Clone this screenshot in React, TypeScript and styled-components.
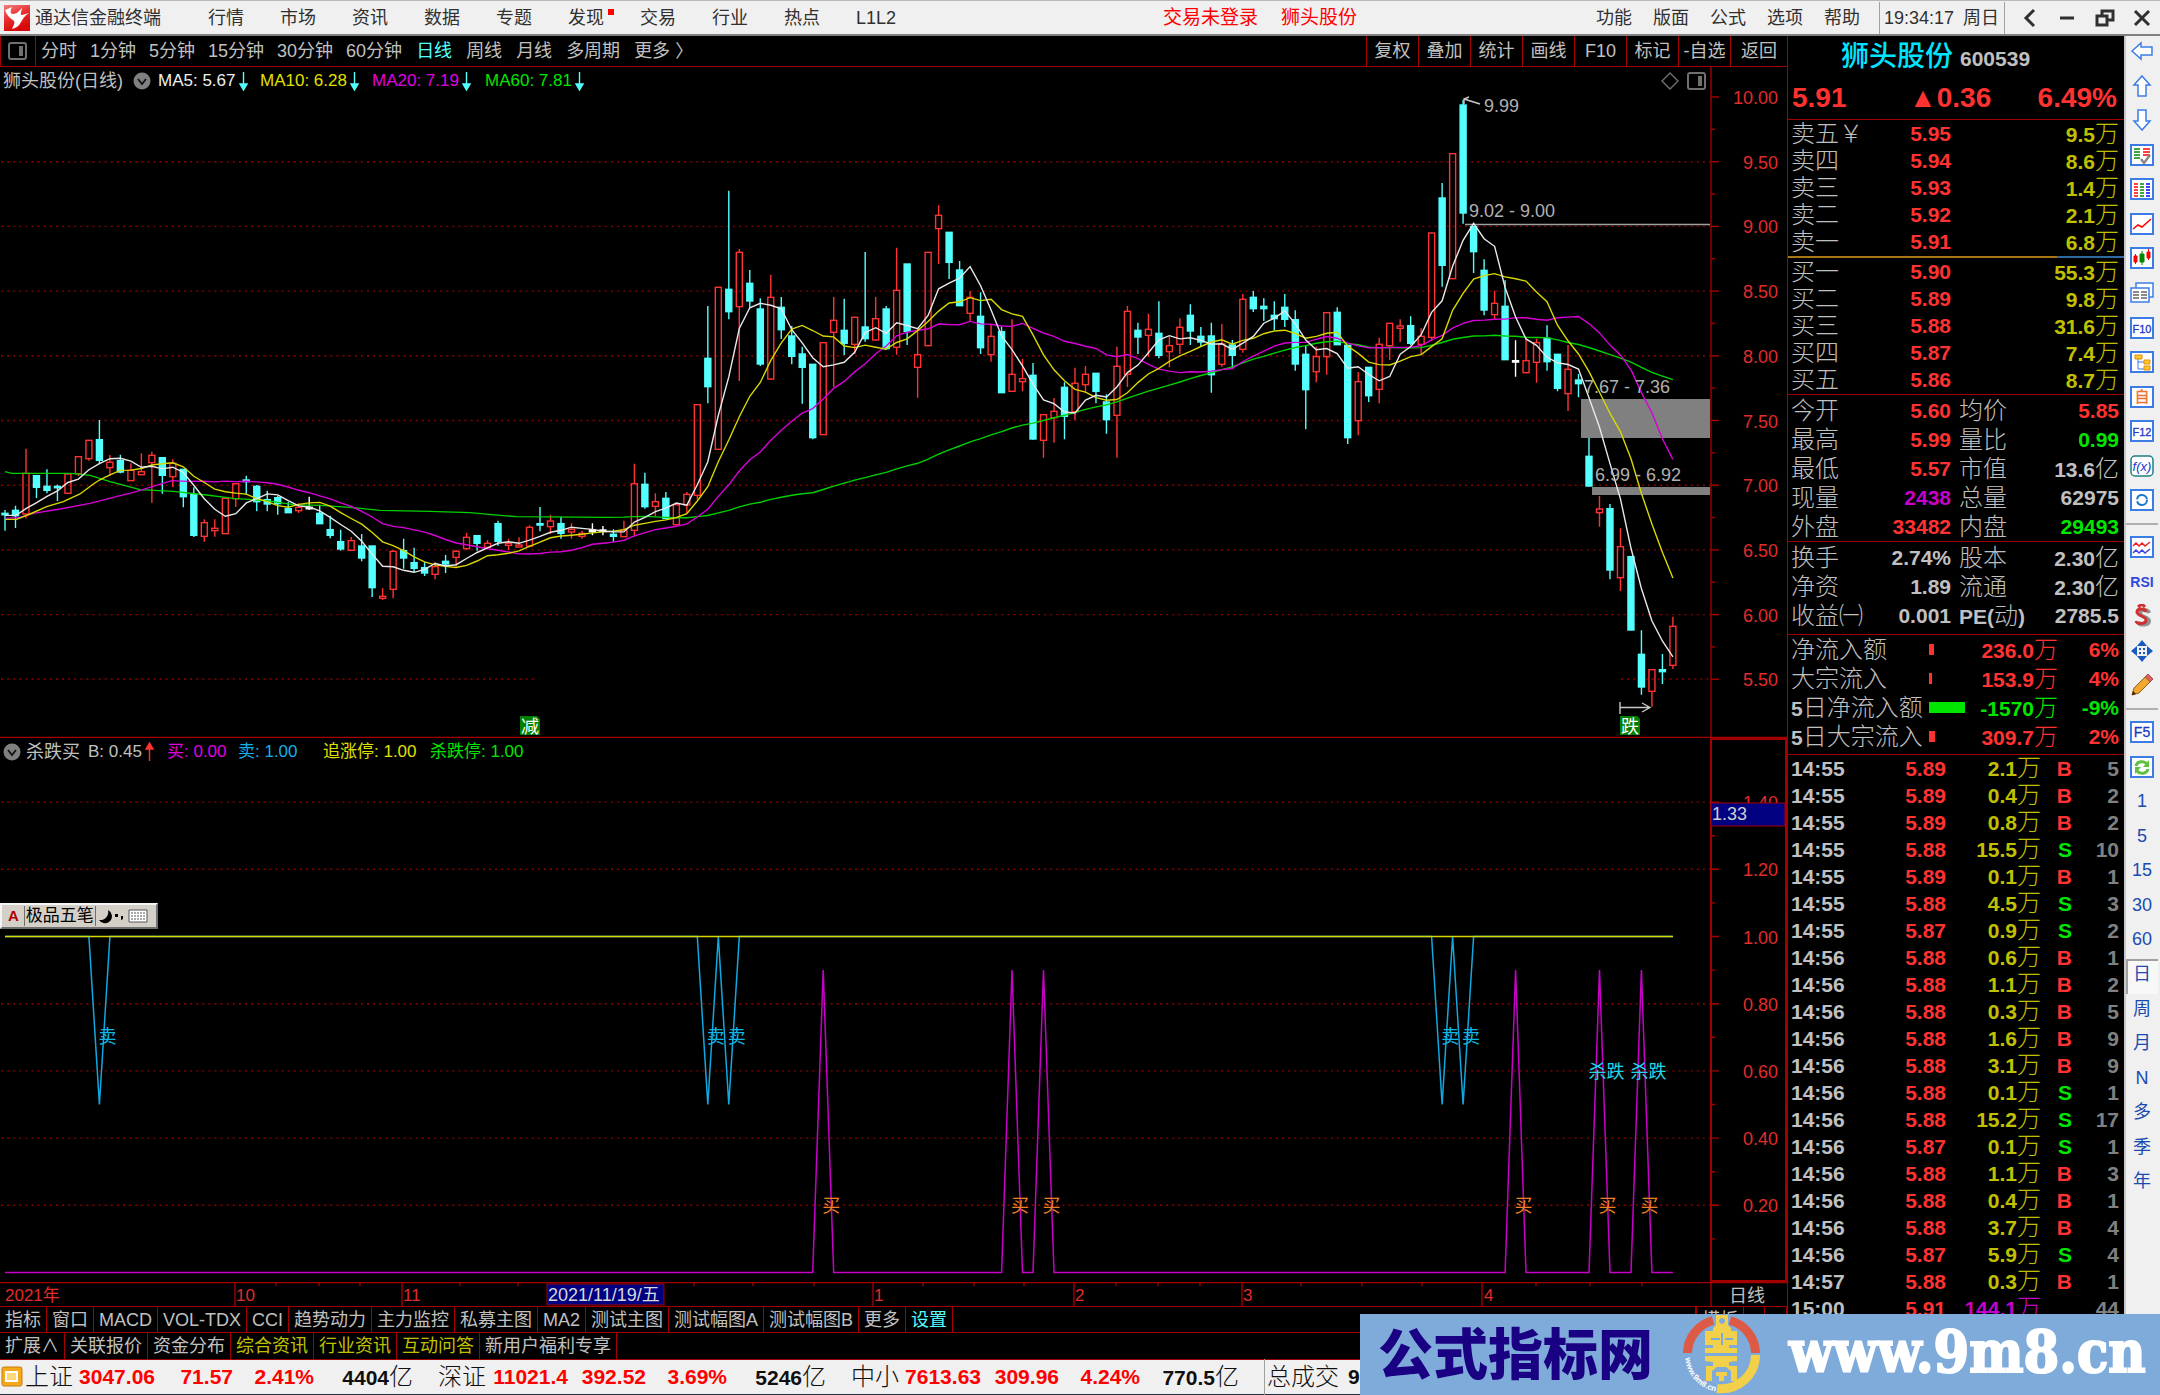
import React from "react";
import styled, { createGlobalStyle } from "styled-components";

const RED = "#ff3232";
const LINE = "#a40000";
const CYAN = "#54ffff";
const GRAY = "#c0c0c0";
const YEL = "#c0c000";
const GREEN = "#00e600";
const MAG = "#c800c8";
const SANS = `"Liberation Sans", "Noto Sans CJK SC", sans-serif`;

const Global = createGlobalStyle`
  * { box-sizing: border-box; }
  body { margin: 0; background: #000; font-family: ${SANS}; font-size: 18px; line-height: 24px; color: ${GRAY}; }
  button { font: inherit; color: inherit; background: none; border: 0; padding: 0; margin: 0; white-space: nowrap; }
  svg { display: block; flex: none; }
`;

const Page = styled.div`
  display: flex;
  flex-direction: column;
  height: 100vh;
  overflow: hidden;
`;

/* ---------- top menu ---------- */
const TopBar = styled.header`
  display: flex;
  align-items: center;
  height: 36px;
  flex: none;
  padding-left: 4px;
  background: #f0f0f0;
  border-top: 1px solid #b8b8b8;
  border-bottom: 2px solid #808080;
  color: #303030;
`;
const Brand = styled.div`
  display: flex;
  align-items: center;
  gap: 5px;
  width: 204px;
`;
const Menu = styled.nav<{ $gap: number }>`
  display: flex;
  gap: ${(p) => p.$gap}px;
`;
const MenuItem = styled.button`
  position: relative;
`;
const Dot = styled.i`
  position: absolute;
  right: -10px;
  top: 3px;
  width: 6px;
  height: 6px;
  background: #f00;
`;
const Notice = styled.div`
  display: flex;
  gap: 23px;
  margin-left: auto;
  margin-right: 239px;
  font-size: 19px;
  color: #f00;
`;
const Clock = styled.time`
  display: flex;
  align-items: center;
  justify-content: space-between;
  width: 126px;
  height: 32px;
  margin-left: 19px;
  padding: 0 5px 0 4px;
  border-left: 1px solid #a0a0a0;
  border-right: 1px solid #a0a0a0;
`;
const WindowButtons = styled.div`
  display: flex;
  width: 155px;
  justify-content: space-between;
  padding: 0 6px 0 13px;
`;

/* ---------- main frame ---------- */
const Body = styled.div`
  display: flex;
  flex: 1;
  min-height: 0;
`;
const ChartColumn = styled.main`
  display: flex;
  flex-direction: column;
  flex: 1;
  min-width: 0;
`;
const Toolbar = styled.div`
  display: flex;
  height: 31px;
  flex: none;
  border-bottom: 1px solid ${LINE};
`;
const PaneToggle = styled.button`
  display: grid;
  place-items: center;
  width: 36px;
  margin-right: 5px;
  border: solid ${LINE};
  border-width: 0 1px;
`;
const Periods = styled.div<{ $gap: number }>`
  display: flex;
  align-items: center;
  gap: ${(p) => p.$gap}px;
  margin-right: 14px;
`;
const Period = styled.button<{ $on?: boolean }>`
  color: ${(p) => (p.$on ? CYAN : GRAY)};
`;
const Tools = styled.div`
  display: flex;
  margin-left: auto;
`;
const Tool = styled.button`
  width: 52px;
  border-left: 1px solid ${LINE};
  &:last-child {
    width: 57px;
  }
`;
const Pane = styled.section<{ $grow: number }>`
  position: relative;
  flex: ${(p) => p.$grow} 1 0;
  min-height: 0;
  svg.plot {
    width: 100%;
    height: 100%;
  }
`;
const Legend = styled.div`
  position: absolute;
  top: 2px;
  left: 3px;
  display: flex;
  align-items: center;
  height: 24px;
  font-size: 17px;
`;
const LegendTitle = styled.span<{ $w: number }>`
  width: ${(p) => p.$w}px;
  font-size: 18px;
  white-space: nowrap;
`;
const LegendItem = styled.span<{ $c: string; $w: number }>`
  display: flex;
  align-items: center;
  gap: 3px;
  width: ${(p) => p.$w}px;
  color: ${(p) => p.$c};
  white-space: nowrap;
`;
const PaneTools = styled.div`
  position: absolute;
  top: 5px;
  right: 80px;
  display: flex;
  gap: 8px;
`;
const DateAxis = styled.div`
  height: 24px;
  flex: none;
  svg {
    width: 100%;
    height: 100%;
  }
`;
const TabRow = styled.div<{ $h: number }>`
  display: flex;
  flex: none;
  height: ${(p) => p.$h}px;
  border-top: 1px solid ${LINE};
`;
const Tab = styled.button<{ $c?: string }>`
  padding: 0 5px;
  border-right: 1px solid ${LINE};
  color: ${(p) => p.$c || GRAY};
`;
const TabEnd = styled.div`
  display: flex;
  margin-left: auto;
  border-left: 2px solid ${LINE};
`;

/* ---------- quote panel ---------- */
const Quote = styled.aside`
  display: flex;
  flex-direction: column;
  width: 337px;
  flex: none;
  border-left: 1px solid ${LINE};
  font-size: 24px;
  font-weight: 300;
`;
const NameRow = styled.div`
  display: flex;
  align-items: baseline;
  gap: 7px;
  height: 38px;
  line-height: 41px;
  padding-left: 53px;
`;
const StockName = styled.h1`
  margin: 0;
  font-size: 28px;
  font-weight: 500;
  color: #00e5ff;
`;
const Num = styled.span<{ $c?: string }>`
  font-size: 21px;
  font-weight: 700;
  color: ${(p) => p.$c || GRAY};
  text-align: right;
  white-space: nowrap;
`;
const Unit = styled.span`
  font-size: 24px;
  font-weight: 300;
`;
const LastRow = styled.div`
  display: grid;
  grid-template-columns: 117px 1fr auto;
  align-items: center;
  height: 45px;
  padding: 2px 7px 0 4px;
  font-size: 28px;
  font-weight: 700;
  color: ${RED};
`;
const Block = styled.div<{ $bottom?: number }>`
  padding: 0 5px ${(p) => p.$bottom || 0}px 3px;
  border-top: 1px solid ${LINE};
`;
const Levels = styled.div`
  padding: 0 5px 1px 3px;
`;
const SellLevels = styled(Levels)`
  border-top: 1px solid ${LINE};
`;
const Split = styled.div`
  height: 2px;
  background: linear-gradient(90deg, #a87414 80%, #2c6aa0 80%);
`;
const LevelRow = styled.div`
  display: grid;
  grid-template-columns: 80px 80px 1fr;
  grid-template-rows: 27px;
  line-height: 28px;
`;
const StatRow = styled.div`
  display: grid;
  grid-template-columns: auto 1fr 92px 76px;
  grid-template-rows: 29px;
  line-height: 31px;
  white-space: nowrap;
`;
const StatLabel = styled.span<{ $second?: boolean }>`
  padding-left: ${(p) => (p.$second ? 8 : 0)}px;
`;
const FlowRow = styled.div`
  display: grid;
  grid-template-columns: 138px 37px 1fr 61px;
  grid-template-rows: 29px;
  line-height: 30px;
  white-space: nowrap;
`;
const FlowBar = styled.i<{ $c: string }>`
  align-self: center;
  height: 11px;
  background: ${(p) => p.$c};
`;
const Ticks = styled.div`
  flex: 1;
  min-height: 0;
  padding: 0 5px 0 3px;
  overflow: hidden;
  border-top: 1px solid ${LINE};
`;
const TickTable = styled.table`
  width: 100%;
  table-layout: fixed;
  border-collapse: collapse;
  td {
    height: 27px;
    padding: 0;
    line-height: 24px;
    text-align: right;
  }
  td:first-child {
    width: 60px;
    text-align: left;
  }
  td:nth-child(2) {
    width: 95px;
  }
  td:nth-child(3) {
    width: 95px;
  }
  td:nth-child(4) {
    width: 31px;
  }
`;

/* ---------- side tool strip ---------- */
const Side = styled.nav`
  width: 36px;
  flex: none;
  padding-right: 2px;
  background: #f0f0f0;
  border-left: 2px solid #c8c8c8;
`;
const SideGroup = styled.div<{ $h: number }>`
  display: grid;
  grid-auto-rows: 1fr;
  height: ${(p) => p.$h}px;
`;
const SideRule = styled.hr`
  margin: 3px 0 7px;
  border: 0;
  border-top: 2px solid #b0b0b0;
`;
const SideButton = styled.button<{ $on?: boolean }>`
  display: grid;
  justify-content: center;
  align-content: start;
  padding-top: 3px;
  font-size: 18px;
  color: #1a4bb0;
  background: ${(p) => (p.$on ? "#f8f8f8" : "none")};
  box-shadow: ${(p) => (p.$on ? "inset 2px 2px #a0a0a0" : "none")};
`;

/* ---------- index strip ---------- */
const Strip = styled.footer`
  display: flex;
  align-items: center;
  flex: none;
  height: 36px;
  background: #f0f0f0;
  border-top: 1px solid #900;
  border-bottom: 1px solid #203040;
  color: #101010;
  font-size: 21px;
  font-weight: 700;
`;
const IndexGroup = styled.div`
  display: grid;
  grid-template-columns: 53px 77px 78px 81px 99px;
  flex: none;
  width: 413px;
  line-height: 36px;
  text-align: right;
`;
const IndexName = styled.span`
  font-size: 24px;
  font-weight: 300;
  text-align: left;
  white-space: nowrap;
`;
const Up = styled.span`
  color: #f00;
`;
const Total = styled.div`
  display: flex;
  gap: 9px;
  padding-left: 2px;
  line-height: 36px;
  white-space: nowrap;
  border-left: 1px solid #a0a0a0;
`;

const Ime = styled.div`
  position: absolute;
  left: 0;
  top: 165px;
  display: flex;
  align-items: center;
  width: 158px;
  height: 26px;
  padding: 0 2px;
  background: #d4d0c8;
  border: 2px solid #808080;
  border-color: #f4f4f4 #707070 #707070 #f4f4f4;
  color: #000;
  font-size: 17px;
`;
const ImeCell = styled.button`
  height: 20px;
  line-height: 20px;
  padding: 0 1px;
  border: solid #707070;
  border-width: 0 1px;
`;
const ImeMark = styled.b`
  font-size: 15px;
  color: #b00000;
  padding: 0 5px 0 4px;
`;

const Watermark = styled.div`
  position: absolute;
  right: 0;
  bottom: 0;
  display: flex;
  align-items: center;
  width: 800px;
  height: 81px;
  padding-left: 18px;
  background: #7fabda;
`;
const WatermarkTitle = styled.strong`
  width: 305px;
  font-size: 55px;
  font-weight: 900;
  line-height: 78px;
  color: #1a0082;
  white-space: nowrap;
`;
const WatermarkUrl = styled.a`
  margin-left: 29px;
  font-family: "DejaVu Serif Condensed", "DejaVu Serif", serif;
  font-size: 57px;
  font-weight: 700;
  line-height: 72px;
  padding-bottom: 6px;
  color: #fff;
  -webkit-text-stroke: 2px #fff;
  text-decoration: none;
`;

/* ---------- price data ----------
   One row per trading day: kind, high, body top, body bottom, low,
   in thirds of a chart unit below the base of its segment. */
const SEGMENTS: [number, string][] = [
  [400, `d330,340,344,392 d317,331,347,384 u146,220,342,355 d227,227,262,294 d208,259,271,280 d254,259,262,303
u222,222,280,280 u170,170,221,228 u120,121,176,182 d60,119,181,192 u165,187,203,228 d164,182,216,220
u190,211,242,242 u160,215,224,226 u155,166,188,308 d172,173,226,281 u178,190,230,262 d207,208,290,322
d262,284,406,411 u358,368,409,425 u358,385,392,410 u295,295,401,401 u250,251,296,321 d227,240,245,284
d255,259,305,334 d272,299,312,334 d287,293,311,344 d306,326,338,338 u310,322,332,339 w290,322,325,330
d314,340,371,371 d347,389,406,415 d389,425,447,452 u411,422,451,453 d402,438,474,484 d438,438,563,591
u565,589,595,600 u450,454,568,595 d416,452,474,506 d443,488,505,517 d486,503,519,528 u486,500,523,538
d465,484,492,519 u450,454,472,500 u398,412,446,449 d405,407,430,452 u420,430,442,446 d362,371,424,437`],
  [180, `u1076,1090,1096,1110 u1072,1095,1101,1101 u1036,1042,1098,1101 d981,1031,1035,1054 u1004,1023,1040,1062
d1010,1031,1060,1076 u1030,1048,1056,1076 u1052,1060,1069,1076 w1030,1050,1055,1066 w1038,1050,1053,1066
d1048,1063,1069,1085 u1022,1050,1070,1070 u851,911,1051,1070 d878,913,980,986 u940,965,979,1008 d936,955,1015,1018
u974,974,1034,1036 u936,943,975,1000 u673,674,946,958 d378,535,620,670 u320,322,808,808 d32,328,395,418
u207,217,380,603 d270,310,363,385 d355,387,552,558 u284,352,597,599 d351,382,449,477 d438,468,529,553
d500,522,562,671 d553,553,773,778 u487,488,764,765 u351,421,457,621 d356,451,490,525 u410,412,493,522
d216,441,476,485 u351,416,480,482 d378,387,506,510 u203,331,502,524 d252,252,454,495 u448,524,562,653 u216,217,497,498`],
  [190, `u46,76,116,222 d127,127,217,267 d213,240,347,348 u303,322,370,395 d307,379,473,492 u405,439,494,515
d410,425,608,609 u388,553,604,605 u506,566,575,604 d519,556,747,749 u672,674,751,803 u624,664,683,758
d577,592,679,748 u533,580,665,690 u528,553,584,608 d550,550,604,640 d613,636,689,731 u470,529,676,803
u348,364,553,591 d398,421,441,492 u371,418,436,500 d334,430,496,505 u440,467,485,532 u385,412,463,492
d343,376,423,465 d411,439,456,470 d398,438,554,608 u402,462,523,530 d450,465,496,537 u312,328,478,488
d303,322,356,366 d325,349,356,393 d334,376,386,420 d312,352,388,411 d361,389,522,542 d467,493,599,718
u470,500,545,577 u367,368,500,554 d352,367,464,465 d465,466,743,762 u546,575,692,736 d532,532,617,636
u443,463,598,640 u400,400,467,510`],
  [80, `u718,738,745,786 d709,737,790,795 u745,769,793,823 u458,459,772,784 d309,354,556,620 u220,221,596,597
d60,75,399,431 d437,440,515,579 d538,571,690,706 u632,670,704,720 d601,679,839,840 w781,842,845,890
u775,842,878,880 u776,788,847,908 d736,775,845,872 d822,823,925,934 u795,868,941,993 d882,900,911,952`],
  [360, `d234,289,378,380 u408,447,458,500 d432,446,630,658 u505,560,653,693 d590,590,810,811 d811,883,981,1004
u928,929,994,1040 d882,929,935,972 u770,799,916,927`],
];
type Candle = { k: string; hi: number; top: number; bot: number; lo: number };
const candles: Candle[] = SEGMENTS.flatMap(([base, rows]) =>
  rows.split(/\s+/).map((r) => {
    const [hi, top, bot, lo] = r.slice(1).split(",").map((v) => base + Number(v) / 3);
    return { k: r[0], hi, top, bot, lo };
  })
);
const cx = (i: number) => 5 + 10.49 * i;
const closes = candles.map((c) => (c.k === "d" ? c.bot : c.top));

/* Average line: days before the loaded range come from a stored lead-in. */
const average = (n: number, lead: number[][]) => {
  const pts = lead.map(([x, y]) => `${x / 3},${400 + y / 3}`);
  for (let i = n - 1; i < closes.length; i++) {
    const sum = closes.slice(i - n + 1, i + 1).reduce((a, b) => a + b, 0);
    pts.push(`${cx(i).toFixed(1)},${(sum / n).toFixed(1)}`);
  }
  return pts.join(" ");
};
const AVERAGES: [string, string][] = [
  ["#00d000", average(60, [[15, 215], [35, 220], [215, 220], [270, 226], [330, 245], [420, 269], [520, 274], [620, 285], [700, 295], [800, 302], [880, 314], [960, 316], [1060, 323], [1140, 331], [1290, 334], [1410, 338], [1500, 346], [1550, 350], [1820, 352]])],
  ["#d800d8", average(20, [[15, 355], [60, 352], [100, 340], [180, 327], [270, 310], [340, 292], [400, 277], [440, 265], [515, 242], [560, 244]])],
  ["#d8d800", average(10, [[15, 358], [50, 358], [90, 342], [140, 320], [190, 305], [240, 282], [280, 252]])],
  ["#e8e8e8", average(5, [[15, 346], [48, 346], [79, 325], [110, 308]])],
];
const priceY = (p: number) => 97 + (10 - p) * 129.4;
const valueY = (v: number) => 1272.5 - v * 336;

const PriceChart = () => (
  <svg className="plot" viewBox="0 67 1787 671" fontFamily={SANS} fontSize="18">
    {[9.5, 9, 8.5, 8, 7.5, 7, 6.5, 6].map((p) => (
      <line key={p} x1="1" x2="1710" y1={priceY(p)} y2={priceY(p)} stroke="#8c0000" strokeWidth="1.4" strokeDasharray="2 4.1" />
    ))}
    <path d="M1 679H537M1621 679H1710" stroke="#8c0000" strokeWidth="1.4" strokeDasharray="2 4.1" />
    <path d="M1465 224.5H1710" stroke="#a0a0a0" strokeWidth="1.4" />
    <path d="M1581 399H1710V438H1581zM1592 487H1710V495H1592z" fill="#808080" />
    {candles.map((c, i) => {
      const x = cx(i);
      const color = c.k === "d" ? CYAN : c.k === "w" ? "#fff" : RED;
      const h = Math.max(c.bot - c.top, 1.4);
      return (
        <g key={i} stroke={color} strokeWidth="1.4" fill={c.k === "u" ? "none" : color}>
          <path d={`M${x} ${c.hi}V${c.top}M${x} ${c.bot}V${c.lo}`} />
          <rect x={x - 3} y={c.top} width="6" height={h} />
        </g>
      );
    })}
    {AVERAGES.map(([c, pts]) => (
      <polyline key={c} points={pts} fill="none" stroke={c} strokeWidth="1.4" />
    ))}
    <g fill="#b0b0b0">
      <text x="1484" y="112">9.99</text>
      <text x="1469" y="217">9.02 - 9.00</text>
      <text x="1584" y="393">7.67 - 7.36</text>
      <text x="1595" y="481">6.99 - 6.92</text>
    </g>
    <path d="M1480 104L1464 99M1469 97L1464 99V104M1620 702V714M1620 707.5H1650M1642 703L1650 707.5L1642 712" fill="none" stroke="#c8c8c8" strokeWidth="1.4" />
    {[520, 1620].map((x, i) => (
      <g key={x}>
        <path d={`M${x} 716h17l3 3v16h-20z`} fill="#008000" />
        <text x={x + 1} y="733" fill="#fff">{i ? "跌" : "减"}</text>
      </g>
    ))}
    <path d="M1711 67V738" stroke={LINE} strokeWidth="1.4" />
    {Array.from({ length: 19 }, (_, i) => 10 - i / 4).map((p, i) => (
      <path key={p} d={`M1711 ${priceY(p)}h${i % 2 ? 4 : 8}`} stroke={LINE} strokeWidth="1.4" />
    ))}
    {Array.from({ length: 10 }, (_, i) => 10 - i / 2).map((p) => (
      <text key={p} x="1778" y={priceY(p) + 7} textAnchor="end" fill="#e02c2c">{p.toFixed(2)}</text>
    ))}
    <path d="M0 737.4H1787" stroke={LINE} strokeWidth="1.4" />
  </svg>
);

const dips = [9, 67, 69, 137, 139];
const peaks = [78, 96, 99, 144, 152, 156];
const spike = (at: number[], rest: number, tip: number) =>
  Array.from({ length: 160 }, (_, i) => `${cx(i).toFixed(1)},${valueY(at.includes(i) ? tip : rest)}`).join(" ");

const SignalChart = () => (
  <svg className="plot" viewBox="0 738 1787 544" fontFamily={SANS} fontSize="18">
    {[1.4, 1.2, 0.8, 0.6, 0.4, 0.2].map((v) => (
      <line key={v} x1="1" x2="1710" y1={valueY(v)} y2={valueY(v)} stroke="#8c0000" strokeWidth="1.4" strokeDasharray="2 4.1" />
    ))}
    <g fill="none" strokeWidth="1.5">
      <polyline points={spike(peaks, 0, 0.9)} stroke={MAG} />
      <polyline points={spike(dips, 1, 0.5)} stroke="#10a8e0" />
      <path d="M5 936.5H1673" stroke="#d8d800" />
    </g>
    {dips.map((i) => <text key={i} x={cx(i) - 1} y="1043" fill="#10b8e8">卖</text>)}
    {peaks.map((i) => <text key={i} x={cx(i) - 1} y="1212" fill="#f08020">买</text>)}
    {[152, 156].map((i) => <text key={i} x={cx(i) - 11} y="1078" fill="#20d8e8">杀跌</text>)}
    <path d="M1711 739H1786V1281H1711z" fill="none" stroke={LINE} strokeWidth="2" />
    {[1.4, 1.2, 1, 0.8, 0.6, 0.4, 0.2].map((v) => (
      <g key={v}>
        <path d={`M1711 ${valueY(v)}h8M1711 ${valueY(v - 0.1)}h4`} stroke={LINE} strokeWidth="1.4" />
        <text x="1778" y={valueY(v) + 7} textAnchor="end" fill="#e02c2c">{v.toFixed(2)}</text>
      </g>
    ))}
    <path d="M1711 803H1785V826H1711z" fill="#000080" stroke={LINE} />
    <text x="1712" y="820" fill="#d0d0d0">1.33</text>
  </svg>
);

const Dates = () => (
  <svg viewBox="0 1282 1787 24" fontFamily={SANS} fontSize="17">
    <path d="M0 1282.5H1787M235 1282v24M402 1282v24M873 1282v24M1074 1282v24M1242 1282v24M1482 1282v24M1711 1282v24" stroke={LINE} strokeWidth="1.4" />
    <path d="M276 1282v4M319 1282v4M360 1282v4M460 1282v4M518 1282v4M694 1282v4M753 1282v4M814 1282v4M923 1282v4M974 1282v4M1024 1282v4M1116 1282v4M1158 1282v4M1200 1282v4M1301 1282v4M1362 1282v4M1422 1282v4M1536 1282v4M1590 1282v4M1642 1282v4" stroke={LINE} strokeWidth="1.4" />
    <path d="M547 1284H664V1305H547z" fill="#000080" stroke={LINE} />
    <g fill="#e02c2c">
      <text x="5" y="1301">2021年</text>
      <text x="236" y="1301">10</text>
      <text x="403" y="1301">11</text>
      <text x="874" y="1301">1</text>
      <text x="1075" y="1301">2</text>
      <text x="1243" y="1301">3</text>
      <text x="1484" y="1301">4</text>
    </g>
    <text x="548" y="1301" fontSize="18" fill="#d8d8d8">2021/11/19/五</text>
    <text x="1729" y="1302" fontSize="18" fill={GRAY}>日线</text>
  </svg>
);

/* ---------- small drawings ---------- */
const PaneIcon = ({ c = "#707070" }: { c?: string }) => (
  <svg width="20" height="18" viewBox="0 0 20 18">
    <rect x="1" y="1" width="17" height="16" rx="2" fill="none" stroke={c} strokeWidth="2" />
    <rect x="11" y="4" width="4" height="10" fill={c} />
  </svg>
);
const Chevron = () => (
  <svg width="18" height="18" viewBox="0 0 18 18">
    <circle cx="9" cy="9" r="8.5" fill="#808080" />
    <path d="M5 7l4 5 4-5" fill="none" stroke="#111" strokeWidth="1.8" />
  </svg>
);
const Arrow = ({ up, c = CYAN }: { up?: boolean; c?: string }) => (
  <svg width="9" height="20" viewBox="0 0 9 20">
    <path d={up ? "M4.500 19V6M1 7l3.500-6L8 7z" : "M4.500 1V14M1 13l3.500 6L8 13z"} stroke={c} fill={c} strokeWidth="1.4" />
  </svg>
);
const AppLogo = () => (
  <svg width="26" height="26" viewBox="0 0 26 26">
    <defs>
      <linearGradient id="brand" x1="0" y1="0" x2="0.4" y2="1">
        <stop offset="0" stopColor="#f08080" />
        <stop offset="0.5" stopColor="#e83030" />
        <stop offset="1" stopColor="#d80808" />
      </linearGradient>
    </defs>
    <rect width="26" height="26" fill="url(#brand)" />
    <path d="M1 5l7-3c-2 4-2 7 1 7 4 0 6-3 9-6-1 5-2 7 0 7l7-2c-5 3-6 6-8 9-2 4-5 6-9 7 2-4 3-7 2-8-2-2-6-3-9-11z" fill="#fff" />
  </svg>
);
const StripIcon = () => (
  <svg width="25" height="22" viewBox="0 0 25 22">
    <rect x="2" y="1" width="20" height="19" rx="2" fill="#f5a81c" stroke="#c87c10" />
    <rect x="6" y="6" width="11" height="9" fill="#ffd878" stroke="#fff" strokeWidth="2" />
  </svg>
);
const CoinLogo = () => (
  <svg width="77" height="79" viewBox="0 0 77 79">
    <defs>
      <path id="coinText" d="M2.500 43A36 36 0 0 0 31 76" />
    </defs>
    <g fill="none" strokeWidth="9">
      <path d="M4.500 38A34 34 0 0 1 30 5.500M47 5.500A34 34 0 0 1 72.500 38" stroke="#dc5a46" />
      <path d="M72.500 40A34 34 0 0 1 34 73.500" stroke="#f2d04a" />
    </g>
    <g fill="#f2d04a">
      <path fillRule="evenodd" d="M33 0h12v10l3 3v3h6v14h-8v3h8v5H22v-5h8v-3h-8V16h8v-3l3-3zM39 3a3 3 0 1 0 .1 0z" />
      <path d="M22 41h32v5l-8 1v4h8v15h-6V56l-5-4h-9l-5 4v10h-6V51h7v-4l-8-1zM33 57h11v4h-3v5h-5v-5h-3z" />
    </g>
    <path d="M28 23h9v2h-9zM38 18h2v12h-2zM42 23h8v2h-8z" fill="#7fabda" />
    <text fontSize="8" fontWeight="700" fill="#fff" fontFamily={SANS}>
      <textPath href="#coinText">www.9m8.cn</textPath>
    </text>
  </svg>
);

const blue = "#3c7ce6";
const Framed = ({ children }: { children?: React.ReactNode }) => (
  <svg width="24" height="24" viewBox="0 0 24 24">
    <rect x="1" y="2" width="22" height="20" fill="#fff" stroke={blue} strokeWidth="2" />
    {children}
  </svg>
);
const FrameText = ({ t, c = "#2038c8", s = 12 }: { t: string; c?: string; s?: number }) => (
  <Framed>
    <text x="12" y="17" textAnchor="middle" fontSize={s} fill={c} stroke={c} strokeWidth="0.3" fontFamily={SANS}>{t}</text>
  </Framed>
);
const BlockArrow = ({ r }: { r: number }) => (
  <svg width="24" height="24" viewBox="0 0 24 24">
    <path transform={`rotate(${r} 12 12)`} d="M12 2l8 9h-4v11H8V11H4z" fill="#fff" stroke={blue} strokeWidth="1.5" />
  </svg>
);
const bars = (x: number, w: number, ys: number[]) => ys.map((y) => `M${x} ${y}h${w}`).join("");
const SIDE_TOP: [string, React.ReactNode][] = [
  ["后退", <BlockArrow r={-90} />],
  ["上移", <BlockArrow r={0} />],
  ["下移", <BlockArrow r={180} />],
  ["报价", <Framed><path d={bars(4, 6, [6, 9, 12, 15])} stroke="#080" strokeWidth="1.5" /><path d={bars(13, 7, [6, 9, 12])} stroke="#f00" strokeWidth="1.5" /><path d="M11 16l3 4 6-8" fill="none" stroke="#888" strokeWidth="2.500" /></Framed>],
  ["列表", <Framed><path d={bars(4, 4, [7, 10, 13, 16, 19])} stroke="#f00" strokeWidth="1.5" /><path d={bars(10, 4, [7, 10, 13, 16, 19])} stroke="#080" strokeWidth="1.5" /><path d={bars(16, 4, [7, 10, 13, 16, 19])} stroke="#00f" strokeWidth="1.5" /></Framed>],
  ["分时图", <Framed><path d="M3 17l5-4 4 2 9-8" fill="none" stroke="#f00" strokeWidth="1.5" /></Framed>],
  ["K线图", <Framed><path d="M4 10h3v6H4zM17 6h3v6h-3zM5.500 8v10M18.500 3v11" fill="#f00" stroke="#f00" /><path d="M10 8h4v8h-4zM12 5v14" fill="#080" stroke="#080" /></Framed>],
  ["资讯", <svg width="24" height="24" viewBox="0 0 24 24"><path d="M6 2h17v14H6z" fill="#fff" stroke={blue} strokeWidth="1.500" /><path d="M1 7h18v14H1z" fill="#fff" stroke={blue} strokeWidth="1.500" /><path d={bars(3, 6, [11, 14, 17]) + bars(11, 6, [11, 14, 17])} stroke="#666" strokeWidth="1.500" /></svg>],
  ["F10", <FrameText t="F10" s={11} />],
  ["板块树", <Framed><path d="M8 8v11h7M8 12h6" fill="none" stroke={blue} /><path d="M5 5h7v4H5zM14 10h6v4h-6zM14 16h6v4h-6z" fill="#ffc830" stroke="#e09000" /></Framed>],
  ["自选", <FrameText t="自" c="#f07030" s={15} />],
  ["F12", <FrameText t="F12" s={11} />],
  ["公式", <svg width="24" height="24" viewBox="0 0 24 24"><rect x="1" y="2" width="22" height="20" rx="4" fill="#fff" stroke="#208080" strokeWidth="1.500" /><text x="12" y="17" textAnchor="middle" fontSize="13" fontStyle="italic" fill="#2038c8" fontFamily={SANS}>f(x)</text></svg>],
  ["刷新", <Framed><circle cx="12" cy="12" r="5" fill="none" stroke="#1878d0" strokeWidth="2" strokeDasharray="14 2" /></Framed>],
];
const SIDE_MID: [string, React.ReactNode][] = [
  ["多图", <Framed><path d="M3 11l3-3 3 3 3-3 3 3 5-4" fill="none" stroke="#f02020" strokeWidth="1.500" /><path d="M3 18l3-3 3 3 3-3 3 3 5-4" fill="none" stroke="#4040e0" strokeWidth="1.500" /></Framed>],
  ["RSI", <svg width="28" height="24" viewBox="0 0 28 24"><text x="14" y="17" textAnchor="middle" fontSize="14" fontWeight="700" fill="#3048e0" fontFamily={SANS}>RSI</text></svg>],
  ["S", <svg width="24" height="24" viewBox="0 0 24 24"><path d="M17 8c-1-4-9-4-9 0s9 4 9 8-9 5-11 1" fill="none" stroke="#909090" strokeWidth="4" transform="translate(2 1)" /><path d="M16 8c-1-4-9-4-9 0s9 4 9 8-9 5-10 1M8 3l4-3 3 3" fill="none" stroke="#d03030" strokeWidth="3" /></svg>],
  ["移动", <svg width="24" height="24" viewBox="0 0 24 24"><path d="M12 1l5 6H7zM12 23l5-6H7zM1 12l6-5v10zM23 12l-6-5v10zM9 9h2v2H9zM13 9h2v2h-2zM9 13h2v2H9zM13 13h2v2h-2z" fill="#1858c0" /></svg>],
  ["画线", <svg width="24" height="24" viewBox="0 0 24 24"><path d="M2 22l2-7L15 4l5 5L9 20z" fill="#f0a830" stroke="#906020" /><path d="M15 4l3-3 5 5-3 3z" fill="#e06060" stroke="#a05050" /><path d="M2 22l1-4 3 3z" fill="#402000" /></svg>],
];
const SIDE_LOW: [string, React.ReactNode][] = [
  ["F5", <FrameText t="F5" s={14} />],
  ["同步", <Framed><path d="M6 11a6 5 0 0 1 11-2M18 14a6 5 0 0 1-11 2" fill="none" stroke="#60c040" strokeWidth="3" /><path d="M19 5v7h-6zM5 19v-7h6z" fill="#60c040" /></Framed>],
  ...["1", "5", "15", "30", "60", "日", "周", "月", "N", "多", "季", "年"].map((t): [string, React.ReactNode] => [t, t]),
];

/* ---------- quote data ---------- */
const sells = [["卖五￥", "5.95", "9.5"], ["卖四", "5.94", "8.6"], ["卖三", "5.93", "1.4"], ["卖二", "5.92", "2.1"], ["卖一", "5.91", "6.8"]];
const buys = [["买一", "5.90", "55.3"], ["买二", "5.89", "9.8"], ["买三", "5.88", "31.6"], ["买四", "5.87", "7.4"], ["买五", "5.86", "8.7"]];
const stats = [
  ["今开", "5.60", RED, "均价", "5.85", RED],
  ["最高", "5.99", RED, "量比", "0.99", GREEN],
  ["最低", "5.57", RED, "市值", "13.6亿", GRAY],
  ["现量", "2438", MAG, "总量", "62975", GRAY],
  ["外盘", "33482", RED, "内盘", "29493", GREEN],
];
const funds = [
  ["换手", "2.74%", GRAY, "股本", "2.30亿", GRAY],
  ["净资", "1.89", GRAY, "流通", "2.30亿", GRAY],
  ["收益㈠", "0.001", GRAY, "PE(动)", "2785.5", GRAY],
];
const flows: [string, number, string, string, string][] = [
  ["净流入额", 5, "236.0", "6%", RED],
  ["大宗流入", 3, "153.9", "4%", RED],
  ["5日净流入额", 36, "-1570", "-9%", GREEN],
  ["5日大宗流入", 6, "309.7", "2%", RED],
];
const ticks = `14:55 5.89 2.1 B 5|14:55 5.89 0.4 B 2|14:55 5.89 0.8 B 2|14:55 5.88 15.5 S 10|14:55 5.89 0.1 B 1|14:55 5.88 4.5 S 3|14:55 5.87 0.9 S 2|14:56 5.88 0.6 B 1|14:56 5.88 1.1 B 2|14:56 5.88 0.3 B 5|14:56 5.88 1.6 B 9|14:56 5.88 3.1 B 9|14:56 5.88 0.1 S 1|14:56 5.88 15.2 S 17|14:56 5.87 0.1 S 1|14:56 5.88 1.1 B 3|14:56 5.88 0.4 B 1|14:56 5.88 3.7 B 4|14:56 5.87 5.9 S 4|14:57 5.88 0.3 B 1|15:00 5.91 144.1 - 44`
  .split("|")
  .map((r) => r.split(" "));
const indexes = [
  ["上证", "3047.06", "71.57", "2.41%", "4404亿"],
  ["深证", "11021.4", "392.52", "3.69%", "5246亿"],
  ["中小", "7613.63", "309.96", "4.24%", "770.5亿"],
];

/* A figure whose 万 / 亿 suffix is set larger and lighter. */
const Figure = ({ v, c }: { v: string; c?: string }) => {
  const m = v.match(/^(.*?)([万亿]?)$/)!;
  return (
    <Num $c={c}>
      {m[1]}
      {m[2] && <Unit>{m[2]}</Unit>}
    </Num>
  );
};
const LevelList = ({ rows }: { rows: string[][] }) => (
  <>
    {rows.map(([n, p, v]) => (
      <LevelRow key={n}>
        <span>{n}</span>
        <Figure v={p} c={RED} />
        <Figure v={v + "万"} c={YEL} />
      </LevelRow>
    ))}
  </>
);
const StatList = ({ rows }: { rows: string[][] }) => (
  <>
    {rows.map(([a, av, ac, b, bv, bc]) => (
      <StatRow key={a}>
        <StatLabel>{a}</StatLabel>
        <Figure v={av} c={ac} />
        <StatLabel $second>{b[0] === "P" ? <><Num>PE(</Num>动<Num>)</Num></> : b}</StatLabel>
        <Figure v={bv} c={bc} />
      </StatRow>
    ))}
  </>
);
const SideButtons = ({ items, h }: { items: [string, React.ReactNode][]; h: number }) => (
  <SideGroup $h={h}>
    {items.map(([label, icon]) => (
      <SideButton key={label} aria-label={label} $on={label === "日"}>{icon}</SideButton>
    ))}
  </SideGroup>
);

export default function App() {
  return (
    <Page>
      <Global />
      <TopBar>
        <Brand><AppLogo />通达信金融终端</Brand>
        <Menu $gap={36}>
          {["行情", "市场", "资讯", "数据", "专题", "发现", "交易", "行业", "热点", "L1L2"].map((t) => (
            <MenuItem key={t}>{t}{t === "发现" && <Dot />}</MenuItem>
          ))}
        </Menu>
        <Notice><span>交易未登录</span><span>狮头股份</span></Notice>
        <Menu $gap={21}>
          {["功能", "版面", "公式", "选项", "帮助"].map((t) => <MenuItem key={t}>{t}</MenuItem>)}
        </Menu>
        <Clock><span>19:34:17</span><span>周日</span></Clock>
        <WindowButtons>
          <button aria-label="返回"><svg width="24" height="24" viewBox="0 0 24 24"><path d="M16 4l-8 8 8 8" fill="none" stroke="#303030" strokeWidth="3" /></svg></button>
          <button aria-label="最小化"><svg width="24" height="24" viewBox="0 0 24 24"><path d="M5 12h14" stroke="#303030" strokeWidth="3" /></svg></button>
          <button aria-label="还原"><svg width="24" height="24" viewBox="0 0 24 24"><path d="M4 10h10v9H4zM9 10V5h11v9h-6" fill="none" stroke="#303030" strokeWidth="3" /></svg></button>
          <button aria-label="关闭"><svg width="24" height="24" viewBox="0 0 24 24"><path d="M5 5l14 14M19 5L5 19" stroke="#303030" strokeWidth="3" /></svg></button>
        </WindowButtons>
      </TopBar>

      <Body>
        <ChartColumn>
          <Toolbar>
            <PaneToggle aria-label="侧栏"><PaneIcon /></PaneToggle>
            <Periods $gap={13}>
              {["分时", "1分钟", "5分钟", "15分钟", "30分钟", "60分钟"].map((t) => <Period key={t}>{t}</Period>)}
            </Periods>
            <Periods $gap={14}>
              {["日线", "周线", "月线", "多周期"].map((t) => <Period key={t} $on={t === "日线"}>{t}</Period>)}
              <Period>更多 〉</Period>
            </Periods>
            <Tools>
              {["复权", "叠加", "统计", "画线", "F10", "标记", "-自选", "返回"].map((t) => <Tool key={t}>{t}</Tool>)}
            </Tools>
          </Toolbar>

          <Pane $grow={671}>
            <PriceChart />
            <Legend>
              <LegendTitle $w={130}>狮头股份(日线)</LegendTitle>
              <LegendItem $c={GRAY} $w={25}><Chevron /></LegendItem>
              <LegendItem $c="#f0f0f0" $w={102}>MA5: 5.67<Arrow /></LegendItem>
              <LegendItem $c="#e0e000" $w={112}>MA10: 6.28<Arrow /></LegendItem>
              <LegendItem $c="#e000e0" $w={113}>MA20: 7.19<Arrow /></LegendItem>
              <LegendItem $c={GREEN} $w={113}>MA60: 7.81<Arrow /></LegendItem>
            </Legend>
            <PaneTools>
              <svg width="18" height="18" viewBox="0 0 18 18"><path d="M9 1l8 8-8 8-8-8z" fill="none" stroke="#707070" strokeWidth="1.400" /></svg>
              <PaneIcon />
            </PaneTools>
          </Pane>
          <Pane $grow={544}>
            <SignalChart />
            <Legend>
              <LegendItem $c={GRAY} $w={23}><Chevron /></LegendItem>
              <LegendTitle $w={62}>杀跌买</LegendTitle>
              <LegendItem $c={GRAY} $w={79}>B: 0.45<Arrow up c={RED} /></LegendItem>
              <LegendItem $c="#e000e0" $w={71}>买: 0.00</LegendItem>
              <LegendItem $c="#10b0e8" $w={85}>卖: 1.00</LegendItem>
              <LegendItem $c="#e0e000" $w={107}>追涨停: 1.00</LegendItem>
              <LegendItem $c={GREEN} $w={107}>杀跌停: 1.00</LegendItem>
            </Legend>
            <Ime>
              <ImeMark>A</ImeMark>
              <ImeCell>极品五笔</ImeCell>
              <svg width="54" height="18" viewBox="0 0 54 18">
                <path d="M12 3a7 7 0 1 1-9 10 8 8 0 0 0 9-10zM19 7h3v3h-3zM25 9h2v3l-2 1z" />
                <path d="M33 3h18v12H33z" fill="#fff" stroke="#555" />
                <path d="M35 6h14M35 9h14M35 12h14" stroke="#555" strokeDasharray="2 1" />
              </svg>
            </Ime>
          </Pane>
          <DateAxis><Dates /></DateAxis>
          <TabRow $h={26}>
            {["指标", "窗口", "MACD", "VOL-TDX", "CCI", "趋势动力", "主力监控", "私募主图", "MA2", "测试主图", "测试幅图A", "测试幅图B", "更多"].map((t) => (
              <Tab key={t}>{t}</Tab>
            ))}
            <Tab $c={CYAN}>设置</Tab>
            <TabEnd><Tab>模板</Tab><Tab>+</Tab><Tab>−</Tab></TabEnd>
          </TabRow>
          <TabRow $h={27}>
            <Tab>扩展∧</Tab>
            <Tab>关联报价</Tab>
            <Tab>资金分布</Tab>
            {["综合资讯", "行业资讯", "互动问答"].map((t) => <Tab key={t} $c={YEL}>{t}</Tab>)}
            <Tab>新用户福利专享</Tab>
          </TabRow>
        </ChartColumn>

        <Quote>
          <NameRow><StockName>狮头股份</StockName><Num>600539</Num></NameRow>
          <LastRow><span>5.91</span><span>▲0.36</span><span>6.49%</span></LastRow>
          <SellLevels><LevelList rows={sells} /></SellLevels>
          <Split />
          <Levels><LevelList rows={buys} /></Levels>
          <Block $bottom={1}><StatList rows={stats} /></Block>
          <Block $bottom={5}><StatList rows={funds} /></Block>
          <Block $bottom={3}>
            {flows.map(([n, w, v, p, c]) => (
              <FlowRow key={n}>
                <span>{n[0] === "5" ? <><Num>5</Num>{n.slice(1)}</> : n}</span>
                <FlowBar $c={c} style={{ width: w }} />
                <Figure v={v + "万"} c={c} />
                <Figure v={p} c={c} />
              </FlowRow>
            ))}
          </Block>
          <Ticks>
            <TickTable>
              <tbody>
                {ticks.map(([t, p, v, s, n], i) => (
                  <tr key={i}>
                    <td><Figure v={t} /></td>
                    <td><Figure v={p} c={RED} /></td>
                    <td><Figure v={v + "万"} c={s === "-" ? MAG : YEL} /></td>
                    <td>{s !== "-" && <Figure v={s} c={s === "B" ? RED : GREEN} />}</td>
                    <td><Figure v={n} c="#808080" /></td>
                  </tr>
                ))}
              </tbody>
            </TickTable>
          </Ticks>
        </Quote>

        <Side>
          <SideButtons items={SIDE_TOP} h={484} />
          <SideRule />
          <SideButtons items={SIDE_MID} h={173} />
          <SideRule />
          <SideButtons items={SIDE_LOW} h={484} />
        </Side>
      </Body>

      <Strip>
        <StripIcon />
        {indexes.map(([n, v, d, p, a]) => (
          <IndexGroup key={n}>
            <IndexName>{n}</IndexName>
            <Up>{v}</Up>
            <Up>{d}</Up>
            <Up>{p}</Up>
            <span>{a.slice(0, -1)}<Unit>亿</Unit></span>
          </IndexGroup>
        ))}
        <Total><IndexName>总成交</IndexName><span>9</span></Total>
      </Strip>

      <Watermark>
        <WatermarkTitle>公式指标网</WatermarkTitle>
        <CoinLogo />
        <WatermarkUrl href="#">www.9m8.cn</WatermarkUrl>
      </Watermark>
    </Page>
  );
}
